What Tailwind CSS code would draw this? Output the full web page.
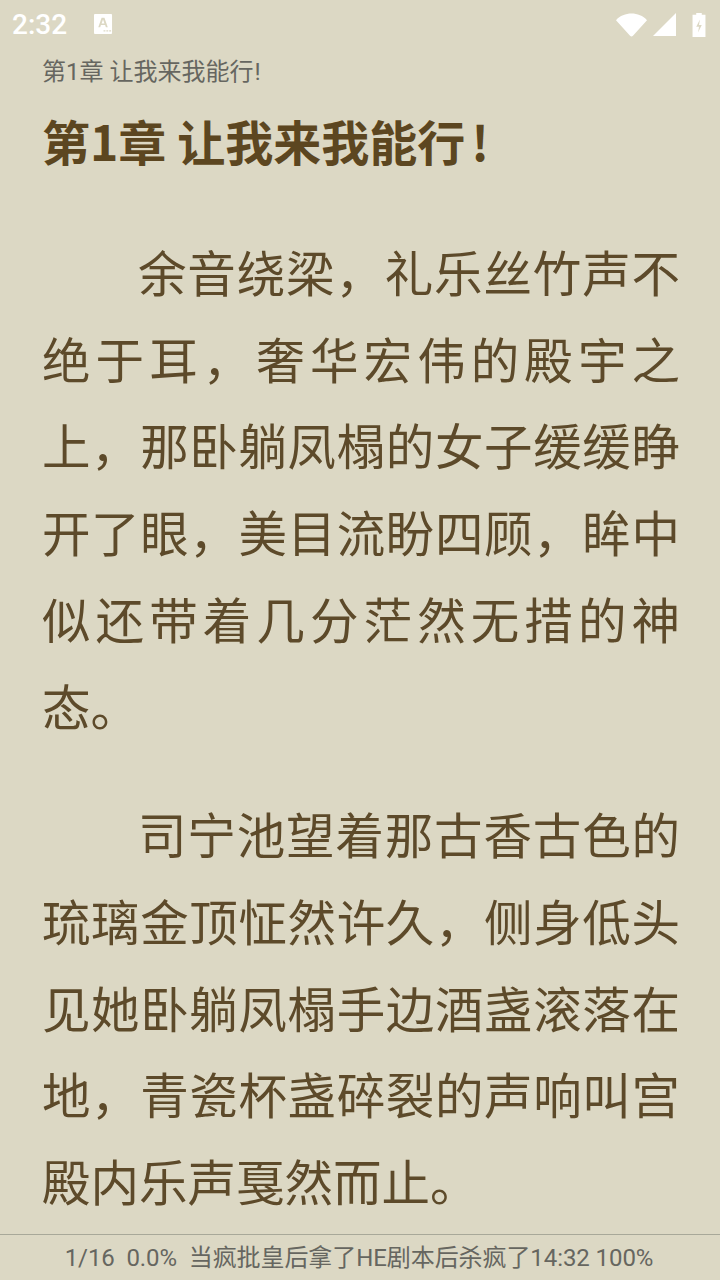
<!DOCTYPE html>
<html lang="zh-CN">
<head>
  <meta charset="UTF-8" />
  <title>第1章 让我来我能行!</title>
  <script src="https://cdn.jsdelivr.net/npm/@tailwindcss/browser@4"></script>
</head>
<body class="bg-[#dcd8c4] font-['Noto_Sans_CJK_SC',sans-serif]">
  <div class="flex flex-col w-[720px] h-[1280px] overflow-hidden">
    <!-- status bar -->
    <div class="flex items-center justify-between h-[50px] pl-[12px] pr-[14px] text-white shrink-0">
      <div class="flex items-center gap-[27px]">
        <span class="font-['Roboto',sans-serif] font-medium text-[28px] leading-none">2:32</span>
        <svg width="19" height="20" viewBox="0 0 20 21" class="-mt-[2px]">
          <path fill="#fff" fill-rule="evenodd" d="M1 0h17a1 1 0 0 1 1 1v19a1 1 0 0 1-1 1H1a1 1 0 0 1-1-1V1a1 1 0 0 1 1-1zM8 4 4.500 14h2l.8-2.400h4.400l.8 2.400h2L11 4zM8 10l1.500-4.300L11 10zM10 17h2v1.500h-2zM13 17h2v1.500h-2zM16 17h2v1.500h-2z"/>
        </svg>
      </div>
      <div class="flex items-center gap-[6px] -mt-[1px]">
        <svg width="31" height="24" viewBox="0 0 32 24"><path fill="#fff" d="M0 7C8-2 24-2 32 7L17.500 23a2 2 0 0 1-3 0z"/></svg>
        <svg width="23" height="23" viewBox="0 0 23 23"><path fill="#fff" d="M23 0v23H0z"/></svg>
        <svg width="14" height="24" class="ml-[10px]" viewBox="0 0 14 26">
          <path fill="#fff" fill-rule="evenodd" d="M4 0h6v2h4v24H0V2h4zM8 7 4 15h3l-1 6 4-8H7z"/>
        </svg>
      </div>
    </div>

    <!-- running title -->
    <div class="pl-[42px] text-[24px] leading-[44px] text-[#666660] font-['Roboto','Noto_Sans_CJK_SC',sans-serif]">第1章 让我来我能行<span class="ml-[1px]">!</span></div>

    <!-- chapter + text -->
    <div class="flex flex-col flex-1 pl-[42px] pr-[40px] text-[#5d4a2a]">
      <h1 class="text-[48px] leading-[70px] font-bold text-[#5c4620] mt-[11px]">第1章 让我来我能行<span class="ml-[6px]">!</span></h1>
      <div class="mt-[53px] text-[48.500px] leading-[86.700px] [text-align-last:justify] text-justify">
        <p class="pl-[96px]">余音绕梁，礼乐丝竹声不</p>
        <p>绝于耳，奢华宏伟的殿宇之</p>
        <p>上，那卧躺凤榻的女子缓缓睁</p>
        <p>开了眼，美目流盼四顾，眸中</p>
        <p>似还带着几分茫然无措的神</p>
        <p class="[text-align-last:left]">态。</p>
        <p class="pl-[96px] mt-[42px]">司宁池望着那古香古色的</p>
        <p>琉璃金顶怔然许久，侧身低头</p>
        <p>见她卧躺凤榻手边酒盏滚落在</p>
        <p>地，青瓷杯盏碎裂的声响叫宫</p>
        <p class="[text-align-last:left]">殿内乐声戛然而止。</p>
      </div>
    </div>

    <!-- footer -->
    <div class="h-[46px] shrink-0 border-t border-[#a8a899] pt-[1px] pr-[2px] flex items-center justify-center text-[24px] tracking-[-0.08px] text-[#666660] font-['Roboto','Noto_Sans_CJK_SC',sans-serif] whitespace-pre">1/16  0.0%  当疯批皇后拿了HE剧本后杀疯了14:32 100%</div>
  </div>
</body>
</html>
